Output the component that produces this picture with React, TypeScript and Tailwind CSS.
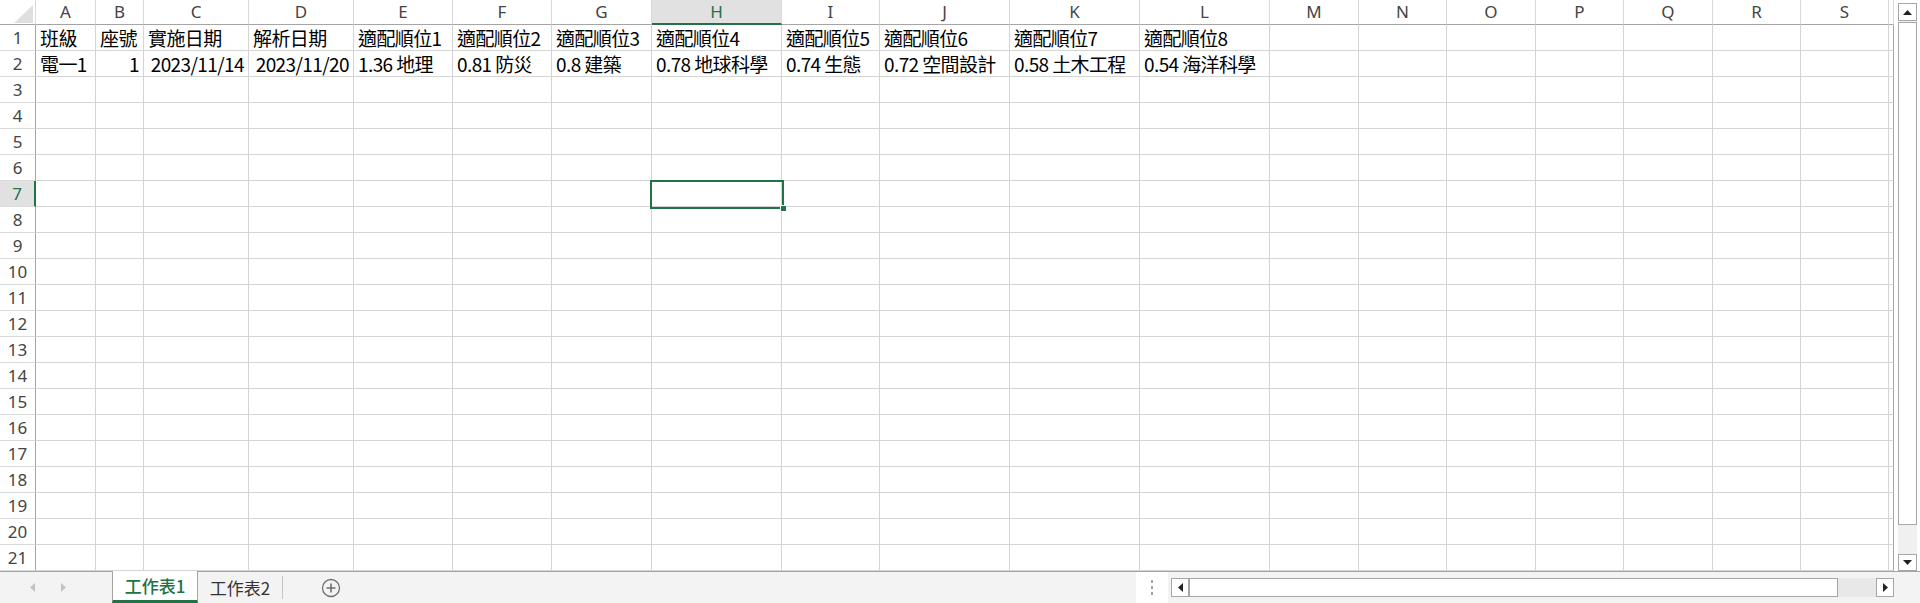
import React from 'react';

const COLS = ['A', 'B', 'C', 'D', 'E', 'F', 'G', 'H', 'I', 'J', 'K', 'L', 'M', 'N', 'O', 'P', 'Q', 'R', 'S', ''];

type Val = { t: string; right?: boolean };

const DATA: Record<number, Val[]> = {
  1: [
    { t: '班級' }, { t: '座號' }, { t: '實施日期' }, { t: '解析日期' },
    { t: '適配順位1' }, { t: '適配順位2' }, { t: '適配順位3' }, { t: '適配順位4' },
    { t: '適配順位5' }, { t: '適配順位6' }, { t: '適配順位7' }, { t: '適配順位8' },
  ],
  2: [
    { t: '電一1' }, { t: '1', right: true }, { t: '2023/11/14', right: true }, { t: '2023/11/20', right: true },
    { t: '1.36 地理' }, { t: '0.81 防災' }, { t: '0.8 建築' }, { t: '0.78 地球科學' },
    { t: '0.74 生態' }, { t: '0.72 空間設計' }, { t: '0.58 土木工程' }, { t: '0.54 海洋科學' },
  ],
};

const ROWS = Array.from({ length: 21 }, (_, i) => i + 1);
const SEL_COL = 'H';
const SEL_ROW = 7;

const font = "font-['Noto_Sans_CJK_TC','Noto_Sans',sans-serif]";
const headFont = "font-['Noto_Sans','Noto_Sans_CJK_TC',sans-serif]";

const Corner = () => (
  <div className="relative border-r border-r-[#dadada] border-b border-b-[#a5a5a5] bg-white">
    <svg className="absolute left-[14px] top-[5px]" width="19" height="18" viewBox="0 0 19 18">
      <polygon points="19,0 19,18 0,18" fill="#dfdfdf" />
    </svg>
  </div>
);

const ColHead = ({ l }: { l: string }) => {
  const sel = l === SEL_COL;
  return (
    <div
      className={`flex items-center justify-center text-[17px] ${headFont} border-r border-r-[#dadada] ${
        sel
          ? 'bg-[#e1e1e1] text-[#217346] border-b-2 border-b-[#217346]'
          : `bg-white text-[#444] border-b border-b-[#a5a5a5] ${l === '' ? 'border-r-[#a5a5a5]' : ''}`
      }`}
    >
      {l}
    </div>
  );
};

const RowHead = ({ n }: { n: number }) => {
  const sel = n === SEL_ROW;
  return (
    <div
      className={`flex items-center justify-center text-[17px] ${headFont} border-b border-b-[#dadada] ${
        sel ? 'bg-[#e1e1e1] text-[#217346] border-r-2 border-r-[#217346]' : 'bg-white text-[#444] border-r border-r-[#a5a5a5]'
      }`}
    >
      {n}
    </div>
  );
};

const Cell = ({ v, last }: { v?: Val; last?: boolean }) => (
  <div
    className={`relative flex items-center pt-[1px] border-b border-b-[#d4d4d4] border-r ${
      last ? 'border-r-[#a5a5a5]' : 'border-r-[#d4d4d4]'
    } ${v?.right ? 'justify-end pr-[4px]' : 'pl-[4px]'} text-[19px] tracking-[-0.6px] text-black whitespace-nowrap ${font}`}
  >
    {v?.t}
  </div>
);

const Arrow = ({ dir }: { dir: 'up' | 'down' | 'left' | 'right' }) => {
  const pts = {
    up: '0,5 9,5 4.5,0',
    down: '0,0 9,0 4.5,5',
    left: '5,0 5,9 0,4.5',
    right: '0,0 0,9 5,4.5',
  }[dir];
  const w = dir === 'up' || dir === 'down' ? 9 : 5;
  const h = dir === 'up' || dir === 'down' ? 5 : 9;
  return (
    <svg width={w} height={h} viewBox={`0 0 ${w} ${h}`}>
      <polygon points={pts} fill="#222" />
    </svg>
  );
};

const Grid = () => (
  <div className="relative w-[1894px] h-[571px]">
    <div className="grid grid-cols-[36px_60px_48px_105px_105px_99px_99px_100px_130px_98px_130px_130px_130px_89px_88px_89px_88px_89px_88px_88px_5px] grid-rows-[25px_repeat(21,26px)] w-full h-full">
      <Corner />
      {COLS.map((c, i) => (
        <ColHead key={i} l={c} />
      ))}
      {ROWS.map((r) => (
        <React.Fragment key={r}>
          <RowHead n={r} />
          {COLS.map((c, i) => (
            <Cell key={i} v={DATA[r]?.[i]} last={i === COLS.length - 1} />
          ))}
        </React.Fragment>
      ))}
    </div>
    <div className="absolute left-[650px] top-[180px] w-[134px] h-[29px] border-2 border-[#217346] pointer-events-none">
      <div className="absolute right-[-5px] bottom-[-5px] w-[7px] h-[7px] bg-[#217346] border border-white" />
    </div>
  </div>
);

const VScroll = () => (
  <div className="w-[26px] h-[571px] bg-white flex flex-col pt-[3px] pl-[4px] pr-[3px]">
    <div className="h-[18px] border border-[#a6a6a6] bg-white flex items-center justify-center">
      <Arrow dir="up" />
    </div>
    <div className="flex-1 flex flex-col bg-[#f0f0f0]">
      <div className="mt-[1px] h-[503px] border border-[#a6a6a6] bg-white" />
    </div>
    <div className="h-[17px] border border-[#a6a6a6] bg-white flex items-center justify-center">
      <Arrow dir="down" />
    </div>
  </div>
);

const TabBar = () => (
  <div className={`flex h-[32px] bg-[#f3f3f3] border-t border-t-[#a5a5a5] ${font}`}>
    <div className="w-[112px] flex items-center gap-[26px] pl-[30px]">
      <svg width="5" height="9" viewBox="0 0 5 9">
        <polygon points="5,0 5,9 0,4.5" fill="#c2c2c2" />
      </svg>
      <svg width="5" height="9" viewBox="0 0 5 9">
        <polygon points="0,0 0,9 5,4.5" fill="#c2c2c2" />
      </svg>
    </div>
    <div className="w-[86px] -mt-[1px] bg-white border-x border-x-[#a5a5a5] border-b-[3px] border-b-[#217346] flex items-center justify-center text-[17px] text-[#217346] font-medium">
      工作表1
    </div>
    <div className="w-[84px] flex items-center justify-center text-[17px] text-[#333]">工作表2</div>
    <div className="w-px my-[4px] bg-[#c6c6c6]" />
    <div className="w-[96px] flex items-center justify-center">
      <svg width="20" height="20" viewBox="0 0 20 20">
        <circle cx="10" cy="10" r="8.5" fill="none" stroke="#707070" strokeWidth="1.3" />
        <path d="M10 5.5v9M5.5 10h9" stroke="#707070" strokeWidth="1.6" />
      </svg>
    </div>
    <div className="flex-1" />
    <div className="w-[32px] bg-white flex flex-col items-center justify-center gap-[3px]">
      <span className="w-[2px] h-[3px] bg-[#a0a0a0]" />
      <span className="w-[2px] h-[3px] bg-[#a0a0a0]" />
      <span className="w-[2px] h-[3px] bg-[#a0a0a0]" />
    </div>
    <div className="w-[726px] flex items-center pl-[3px]">
      <div className="w-full h-[19px] flex bg-[#e8e8e8]">
        <div className="w-[18px] border border-[#a6a6a6] bg-white flex items-center justify-center">
          <Arrow dir="left" />
        </div>
        <div className="w-[649px] border border-[#a6a6a6] bg-white" />
        <div className="flex-1" />
        <div className="w-[18px] border border-[#a6a6a6] bg-white flex items-center justify-center">
          <Arrow dir="right" />
        </div>
      </div>
    </div>
    <div className="w-[26px]" />
  </div>
);

export default function App() {
  return (
    <div className="w-[1920px] h-[603px] bg-white overflow-hidden flex flex-col">
      <div className="flex">
        <Grid />
        <VScroll />
      </div>
      <TabBar />
    </div>
  );
}
